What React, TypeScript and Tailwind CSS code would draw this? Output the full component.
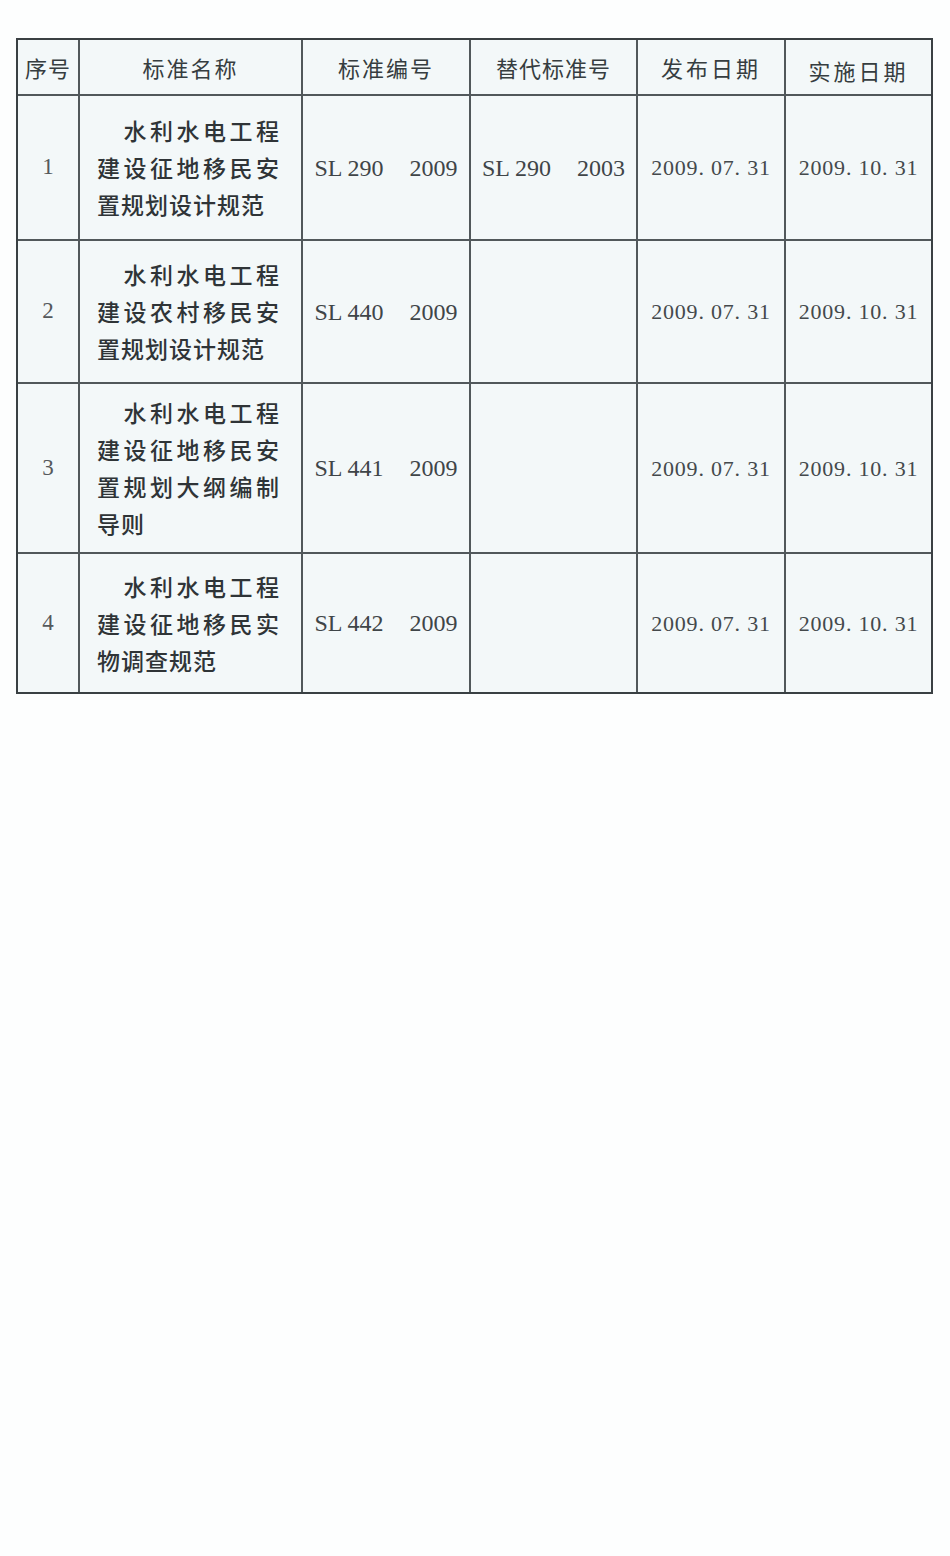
import React from "react";

const CJK = "font-['Noto_Sans_CJK_SC','Noto_Sans',sans-serif]";
const SERIF = "font-['Liberation_Serif','Times_New_Roman',serif]";

type Line = { text: string; mode: "indent" | "justify" | "natural" };

function JLine({ line }: { line: Line }) {
  if (line.mode === "natural") {
    return <div className="tracking-[1px] whitespace-nowrap">{line.text}</div>;
  }
  const chars = Array.from(line.text);
  return (
    <div className="flex justify-between">
      {line.mode === "indent" && <span className="w-[23px]" />}
      {chars.map((c, i) => (
        <span key={i}>{c}</span>
      ))}
    </div>
  );
}

type Row = {
  no: string;
  name: Line[];
  code: [string, string];
  replace?: [string, string];
  pub: string;
  impl: string;
  h: string;
};

const rows: Row[] = [
  {
    no: "1",
    name: [
      { text: "水利水电工程", mode: "indent" },
      { text: "建设征地移民安", mode: "justify" },
      { text: "置规划设计规范", mode: "natural" },
    ],
    code: ["SL 290", "2009"],
    replace: ["SL 290", "2003"],
    pub: "2009. 07. 31",
    impl: "2009. 10. 31",
    h: "h-[145px]",
  },
  {
    no: "2",
    name: [
      { text: "水利水电工程", mode: "indent" },
      { text: "建设农村移民安", mode: "justify" },
      { text: "置规划设计规范", mode: "natural" },
    ],
    code: ["SL 440", "2009"],
    pub: "2009. 07. 31",
    impl: "2009. 10. 31",
    h: "h-[143px]",
  },
  {
    no: "3",
    name: [
      { text: "水利水电工程", mode: "indent" },
      { text: "建设征地移民安", mode: "justify" },
      { text: "置规划大纲编制", mode: "justify" },
      { text: "导则", mode: "natural" },
    ],
    code: ["SL 441", "2009"],
    pub: "2009. 07. 31",
    impl: "2009. 10. 31",
    h: "h-[170px]",
  },
  {
    no: "4",
    name: [
      { text: "水利水电工程", mode: "indent" },
      { text: "建设征地移民实", mode: "justify" },
      { text: "物调查规范", mode: "natural" },
    ],
    code: ["SL 442", "2009"],
    pub: "2009. 07. 31",
    impl: "2009. 10. 31",
    h: "h-[138px]",
  },
];

function Code({ v }: { v: [string, string] }) {
  return (
    <div className={`${SERIF} text-[24px] text-[#3f4548] flex whitespace-nowrap leading-none`}>
      <span>{v[0]}</span>
      <span className="ml-[26px]">{v[1]}</span>
    </div>
  );
}

export default function App() {
  return (
    <div className="w-[950px] h-[1556px] bg-[#fdfefe] pt-[38px] pl-[16px]">
      <div className="w-[917px] border-2 border-[#3a4043] bg-[#f3f8f9]">
        {/* header */}
        <div className={`flex h-[56px] border-b-2 border-[#51585b] ${CJK} text-[22px] text-[#363d40]`}>
          <div className="w-[62px] border-r-2 border-[#51585b] flex items-center justify-center tracking-[1px]">序号</div>
          <div className="w-[223px] border-r-2 border-[#51585b] flex items-center justify-center tracking-[2px]">标准名称</div>
          <div className="w-[168px] border-r-2 border-[#51585b] flex items-center justify-center tracking-[2px]">标准编号</div>
          <div className="w-[167px] border-r-2 border-[#51585b] flex items-center justify-center tracking-[1px]">替代标准号</div>
          <div className="w-[148px] border-r-2 border-[#51585b] flex items-center justify-center tracking-[3px]">发布日期</div>
          <div className="w-[145px] flex items-center justify-center tracking-[3px] pt-[6px]">实施日期</div>
        </div>
        {rows.map((r, idx) => (
          <div
            key={r.no}
            className={`flex ${r.h} ${idx < rows.length - 1 ? "border-b-2" : ""} border-[#51585b]`}
          >
            <div className={`w-[62px] border-r-2 border-[#51585b] flex items-center justify-center ${SERIF} text-[23px] text-[#55595c]`}>
              {r.no}
            </div>
            <div className="w-[223px] border-r-2 border-[#51585b] flex items-center pl-[17px]">
              <div className={`w-[182px] flex flex-col ${CJK} font-medium text-[23px] leading-[37px] text-[#2f3437]`}>
                {r.name.map((l, i) => (
                  <JLine key={i} line={l} />
                ))}
              </div>
            </div>
            <div className="w-[168px] border-r-2 border-[#51585b] flex items-center justify-center">
              <Code v={r.code} />
            </div>
            <div className="w-[167px] border-r-2 border-[#51585b] flex items-center justify-center">
              {r.replace && <Code v={r.replace} />}
            </div>
            <div className={`w-[148px] border-r-2 border-[#51585b] flex items-center justify-center ${SERIF} text-[22px] tracking-[0.8px] text-[#44494c] whitespace-nowrap`}>
              {r.pub}
            </div>
            <div className={`w-[145px] flex items-center justify-center ${SERIF} text-[22px] tracking-[0.8px] text-[#44494c] whitespace-nowrap`}>
              {r.impl}
            </div>
          </div>
        ))}
      </div>
    </div>
  );
}
